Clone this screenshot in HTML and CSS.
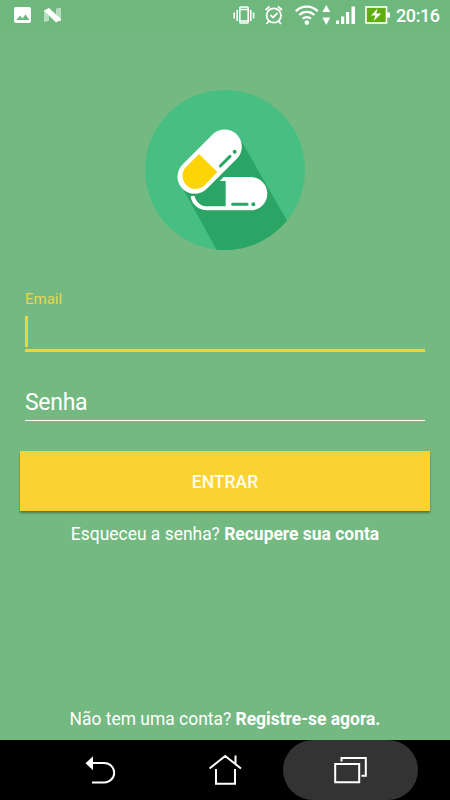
FILE: index.html
```
<!DOCTYPE html>
<html lang="pt-BR">
<head>
    <meta charset="UTF-8">
    <meta name="viewport" content="width=device-width, initial-scale=1">
    <title>Entrar</title>
    <link rel="stylesheet" href="styles.css">
</head>
<body>
    <div id="status-bar">
        <svg class="status-icons" width="66" height="32" viewBox="0 0 66 32">
            <rect x="14" y="7" width="17" height="16" rx="2" fill="#fff"/>
            <path d="M16.500 20l3.500-4.500 2.500 3 3-4 4 5.500z" fill="#6fb87d"/>
            <path d="M44 10l5 3v8l-5 1zM56 8.500l5-.8V22l-5-3z" fill="#fff" opacity=".5"/>
            <path d="M44 10.500l5-2.500 12.500 11.500-5.500 3z" fill="#fff"/>
        </svg>
        <svg class="status-icons" width="160" height="32" viewBox="230 0 160 32">
            <!-- vibrate -->
            <g fill="none" stroke="#fff" stroke-width="1.600">
                <rect x="239.800" y="7" width="8.400" height="16" rx="1"/>
                <path d="M240 9.500h8M240 21h8M237.200 10v11M250.800 10v11M234.200 12.500v6M253.600 12.500v6"/>
            </g>
            <!-- alarm -->
            <g fill="none" stroke="#fff" stroke-width="1.800">
                <circle cx="273.800" cy="15.500" r="7.200"/>
                <path d="M270.500 15l2.500 2.500 4.500-4.500M265.500 10l4-3.500M278 6.500l4 3.500M269 21l-2.500 3M278.500 21l2.500 3"/>
            </g>
            <!-- wifi -->
            <g fill="none" stroke="#fff" stroke-width="2.300">
                <path d="M295.800 11.200a15.500 15.500 0 0 1 22 0M299.300 15a10.500 10.500 0 0 1 15 0M302.700 18.800a5.800 5.800 0 0 1 8.200 0"/>
            </g>
            <circle cx="306.800" cy="22.600" r="2.300" fill="#fff"/>
            <path d="M326.300 5l4 7h-8zM326.300 25l4-7.500h-8z" fill="#fff"/>
            <!-- signal -->
            <path d="M336 20.500h3V24h-3zM341 16.500h3.200V24H341zM346 12h3.200v12H346zM351.500 6.500h3.500V24h-3.500z" fill="#fff"/>
            <!-- battery -->
            <rect x="366" y="7" width="20.500" height="16" fill="#5fad12" stroke="#fff" stroke-width="1.600"/>
            <path d="M387 12.500h3v5h-3z" fill="#fff"/>
            <path d="M377.500 8.500l-6.300 7h4.300l-2 5.500 7.800-7.500h-5z" fill="#fff"/>
        </svg>
        <span class="clock">20:16</span>
    </div>

    <div id="main">
        <svg class="logo" viewBox="30 30 480 480">
            <defs>
                <clipPath id="disc"><circle cx="270" cy="270" r="240"/></clipPath>
            </defs>
            <circle cx="270" cy="270" r="240" fill="#47bf83"/>
            <path d="M136 312L248 515H500L455 420 316 178 270 250z" fill="#2ba566" clip-path="url(#disc)"/>
            <!-- lying pill -->
            <path d="M266 291H347a50 50 0 0 1 0 100H218C190 391 170 374 167 349L178 347C184 367 197 379 218 379H272V303H254z" fill="#fff"/>
            <path d="M293 373H336" class="shine"/>
            <circle cx="355" cy="373" r="6" fill="#2ba566"/>
            <!-- tilted pill -->
            <path d="M269 200L179 290" stroke="#fff" stroke-width="103" stroke-linecap="round"/>
            <path d="M192 222L247 276 207 318A39.500 39.500 0 0 1 151 263z" fill="#fdd506"/>
            <path d="M256 258L285 229" class="shine"/>
            <circle cx="299" cy="215" r="6" fill="#2ba566"/>
        </svg>

        <div class="field active">
            <label>Email</label>
            <div class="input"><span class="cursor"></span></div>
        </div>
        <div class="field">
            <div class="input">Senha</div>
        </div>

        <button class="btn">ENTRAR</button>
        <p class="hint">Esqueceu a senha? <b>Recupere sua conta</b></p>
        <p class="hint register">Não tem uma conta? <b>Registre-se agora.</b></p>
    </div>

    <div id="nav-bar">
        <svg width="125" height="60" viewBox="32 740 125 60">
            <path d="M92 763h12.500a9.700 9.700 0 0 1 0 19.400H92" class="line"/>
            <path d="M85.500 763.200l7.500-7v14z" fill="#fff"/>
        </svg>
        <svg width="125" height="60" viewBox="157 740 125 60">
            <path d="M209.500 768.500l15.700-12.500 15.800 12.500M235.500 755.500v8.500M216 769v14.700h19V769" class="line"/>
        </svg>
        <div class="recents">
            <svg width="135" height="60" viewBox="282.500 740 135 60">
                <path d="M334.700 764h24v18.300h-24zM341 761.500V758h24.300v17.700H361" class="line"/>
            </svg>
        </div>
    </div>
</body>
</html>
```
FILE: styles.css
```
body {
    margin: 0;
    height: 100vh;
    display: flex;
    flex-direction: column;
    overflow: hidden;
    background: #73b981;
    color: #fff;
    font-family: Roboto, sans-serif;
}

#status-bar {
    height: 32px;
    flex: none;
    display: flex;
    justify-content: space-between;
    background: #6fb87d;
}

.status-icons {
    display: block;
}

.status-icons + .status-icons {
    margin-left: auto;
}

.clock {
    width: 54px;
    margin-left: 6px;
    font-size: 18px;
    line-height: 32px;
    font-weight: 500;
    letter-spacing: -0.4px;
}

#main {
    flex: 1;
    display: flex;
    flex-direction: column;
    padding: 58px 20px 0;
}

.logo {
    width: 160px;
    height: 160px;
    align-self: center;
    margin-bottom: 40px;
}

.shine {
    stroke: #2ba566;
    stroke-width: 9;
    stroke-linecap: round;
}

.field {
    margin: 0 5px;
}

.field label {
    display: block;
    font-size: 15px;
    line-height: 18px;
    color: #e6d748;
}

.field .input {
    height: 38px;
    font-size: 23px;
    line-height: 41px;
    letter-spacing: -0.3px;
    border-bottom: 1px solid #fff;
}

.field.active {
    margin-bottom: 30px;
}

.field.active .input {
    display: flex;
    height: 41px;
    border-bottom: 3px solid #e6d748;
}

.cursor {
    width: 3px;
    height: 31px;
    margin-top: 8px;
    background: #e6d748;
}

.btn {
    height: 60px;
    margin: 30px 0 0;
    padding: 2px 0 0;
    border: 0;
    background: #fad333;
    box-shadow: 0 2px 2px rgba(0, 0, 0, 0.35);
    color: #fffde8;
    font: 500 17.5px Roboto, sans-serif;
}

.hint {
    margin: 12px 0 0;
    font-size: 17.45px;
    line-height: 22px;
    text-align: center;
}

.hint.register {
    margin: auto 0 10px;
}

#nav-bar {
    height: 60px;
    flex: none;
    display: flex;
    padding-left: 32px;
    background: #000;
}

#nav-bar svg {
    display: block;
}

#nav-bar .line {
    fill: none;
    stroke: #fff;
    stroke-width: 2;
}

.recents {
    width: 135px;
    margin-left: 0.5px;
    border-radius: 30px;
    background: #333;
}
```
